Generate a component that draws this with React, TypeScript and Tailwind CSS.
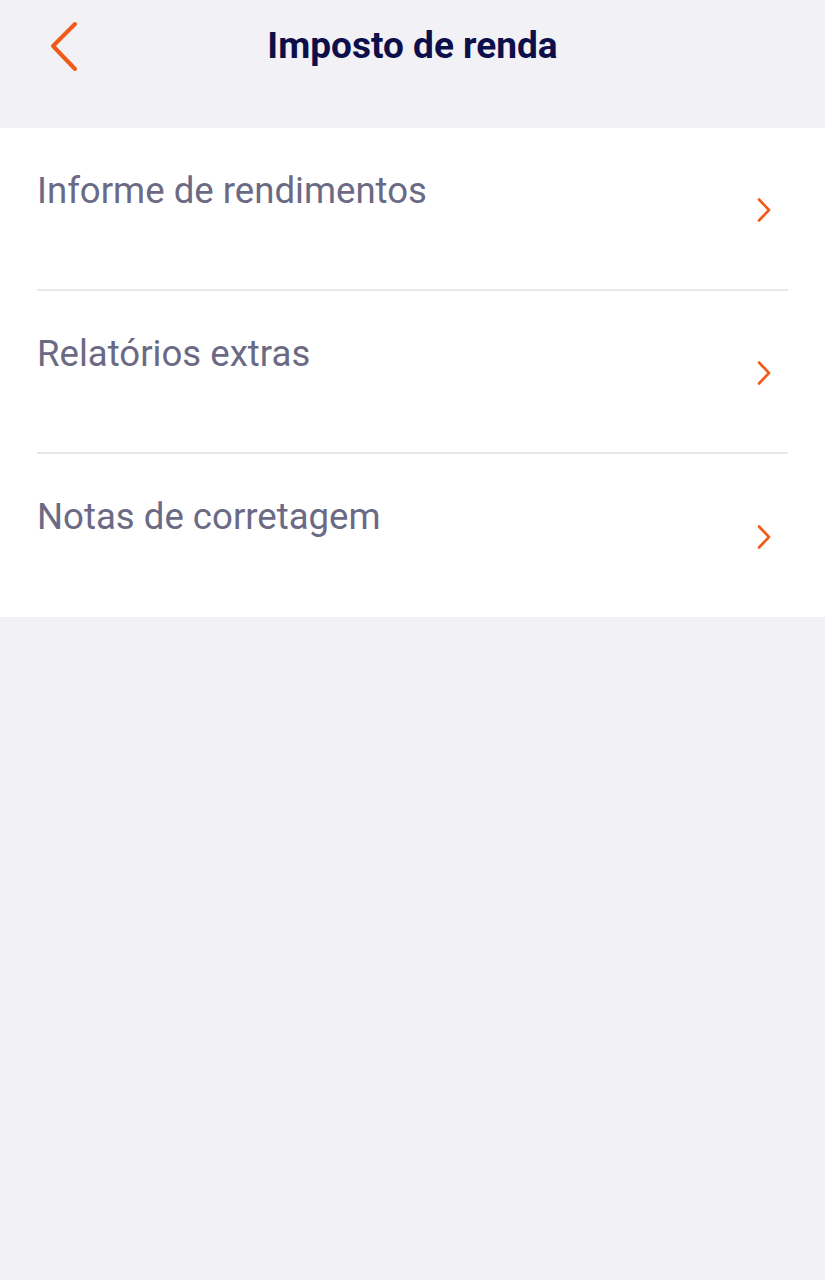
const items = ['Informe de rendimentos', 'Relatórios extras', 'Notas de corretagem']

function ChevronRight() {
  return (
    <svg width="16" height="26" viewBox="0 0 16 26" fill="none" aria-hidden="true">
      <path d="M3 2.5 L13 13 L3 23.5" stroke="#f25a1a" strokeWidth="2.6" strokeLinecap="round" strokeLinejoin="round" />
    </svg>
  )
}

export default function App() {
  return (
    <div className="min-h-[1280px] bg-[#f1f1f6] font-['Roboto',sans-serif]">
      {/* Header */}
      <header className="h-[128px] relative flex justify-center">
        <button className="absolute left-[44px] top-[16px] p-1" aria-label="Voltar">
          <svg width="32" height="54" viewBox="0 0 32 54" fill="none">
            <path d="M27 4 L5 26 L27 49" stroke="#f25a1a" strokeWidth="4" strokeLinecap="round" strokeLinejoin="round" />
          </svg>
        </button>
        <h1 className="mt-[23px] text-[37px] leading-[46px] font-bold text-[#0d0f4a]">
          Imposto de renda
        </h1>
      </header>

      {/* List */}
      <div className="bg-white">
        {items.map((label, i) => (
          <div key={label} className="pl-[37px] pr-[37px]">
            <div
              className={`h-[163px] flex justify-between ${
                i < items.length - 1 ? 'border-b-2 border-[#e6e6ec]' : ''
              }`}
            >
              <span className="pt-[41px] text-[36.6px] leading-[44px] text-[#6b6a85]">{label}</span>
              <div className="self-center pr-[16px] pt-[2px]">
                <ChevronRight />
              </div>
            </div>
          </div>
        ))}
      </div>
    </div>
  )
}
